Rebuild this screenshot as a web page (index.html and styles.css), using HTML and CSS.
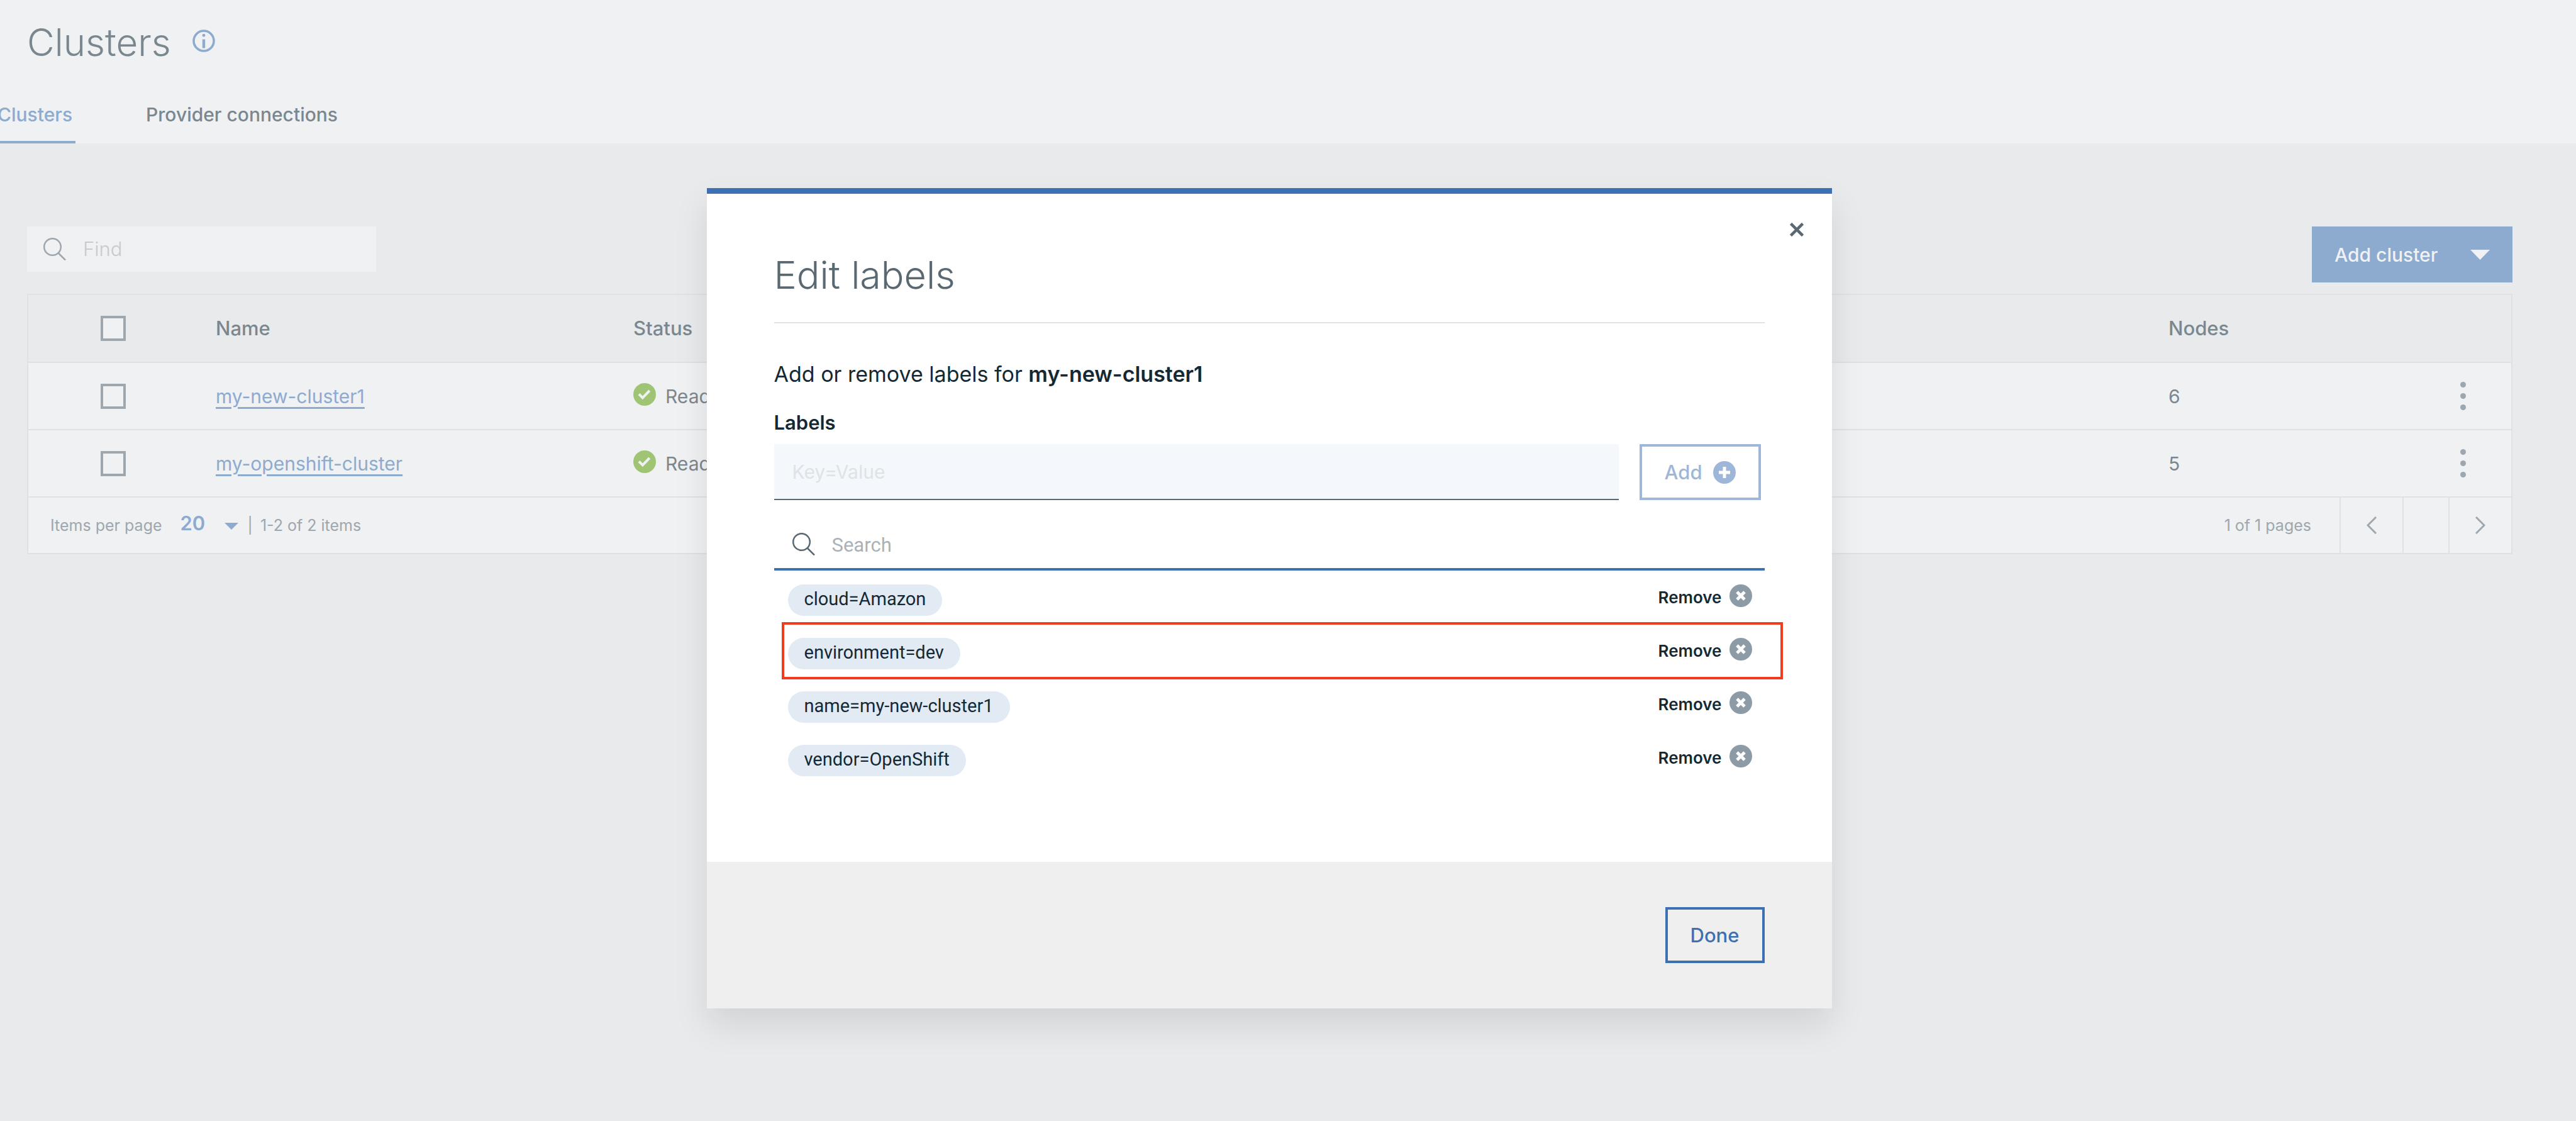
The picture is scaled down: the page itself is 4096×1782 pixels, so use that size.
FILE: index.html
```html
<!DOCTYPE html>
<html lang="en">
<head>
<meta charset="utf-8">
<title>Clusters</title>
<link rel="stylesheet" href="styles.css">
</head>
<body>
<header class="page-header">
  <div class="title-row">
    <h1 class="page-title">Clusters</h1>
    <svg class="icon-info" viewBox="0 0 36 36" role="img" aria-label="About clusters">
      <circle cx="18" cy="18" r="16" fill="none" stroke="currentColor" stroke-width="3.6"/>
      <circle cx="18" cy="9.200" r="2.4" fill="currentColor"/>
      <rect x="15.8" y="15.5" width="4.4" height="14" fill="currentColor"/>
    </svg>
  </div>
  <nav class="tabs">
    <a class="tab tab-active" href="#clusters">Clusters</a>
    <a class="tab" href="#connections">Provider connections</a>
  </nav>
</header>

<main class="page-main">
  <div class="toolbar">
    <label class="find">
      <svg class="icon-search" viewBox="0 0 36 36" aria-hidden="true">
        <circle cx="14.5" cy="14.5" r="13.3"/><path d="M24 24.5 35 35.5"/>
      </svg>
      <input class="find-input" type="search" placeholder="Find" aria-label="Find">
    </label>
    <button class="add-cluster" type="button">Add cluster
      <svg class="caret-large" viewBox="0 0 31 16" aria-hidden="true"><path d="M0 0h31L15.500 16z"/></svg>
    </button>
  </div>

  <section class="data">
    <table class="cluster-table">
      <thead>
        <tr>
          <th class="col-check"><input class="check" type="checkbox" aria-label="Select all clusters"></th>
          <th class="col-name">Name</th>
          <th class="col-status">Status</th>
          <th class="col-nodes">Nodes</th>
          <th class="col-actions"></th>
        </tr>
      </thead>
      <tbody>
        <tr>
          <td class="col-check"><input class="check" type="checkbox" aria-label="Select my-new-cluster1"></td>
          <td><a class="cluster-link" href="#my-new-cluster1">my-new-cluster1</a></td>
          <td><span class="status"><svg class="icon-ok" viewBox="0 0 36 36" aria-hidden="true"><circle cx="18" cy="18" r="18"/><path d="M9 17.500 14.800 23.300 25.800 12"/></svg>Ready</span></td>
          <td>6</td>
          <td class="col-actions"><button class="menu" type="button" aria-label="Actions"><svg class="icon-dots" viewBox="0 0 9 45"><circle cx="4.500" cy="4.500" r="4.500"/><circle cx="4.500" cy="22.500" r="4.500"/><circle cx="4.500" cy="40.500" r="4.500"/></svg></button></td>
        </tr>
        <tr>
          <td class="col-check"><input class="check" type="checkbox" aria-label="Select my-openshift-cluster"></td>
          <td><a class="cluster-link" href="#my-openshift-cluster">my-openshift-cluster</a></td>
          <td><span class="status"><svg class="icon-ok" viewBox="0 0 36 36" aria-hidden="true"><circle cx="18" cy="18" r="18"/><path d="M9 17.500 14.800 23.300 25.800 12"/></svg>Ready</span></td>
          <td>5</td>
          <td class="col-actions"><button class="menu" type="button" aria-label="Actions"><svg class="icon-dots" viewBox="0 0 9 45"><circle cx="4.500" cy="4.500" r="4.500"/><circle cx="4.500" cy="22.500" r="4.500"/><circle cx="4.500" cy="40.500" r="4.500"/></svg></button></td>
        </tr>
      </tbody>
    </table>
    <div class="pagination">
      <label for="page-size">Items per page</label>
      <span class="page-size-wrap">
        <select class="page-size" id="page-size"><option>20</option></select>
        <svg class="caret-small" viewBox="0 0 22 11" aria-hidden="true"><path d="M0 0h22L11 11z"/></svg>
      </span>
      <span class="divider">|</span>
      <span>1-2 of 2 items</span>
      <span class="page-count">1 of 1 pages</span>
      <button class="page-button" type="button" aria-label="Previous page"><svg class="icon-chevron" viewBox="0 0 16 28"><path d="M15 1 2 14l13 13"/></svg></button>
      <span class="page-current"></span>
      <button class="page-button" type="button" aria-label="Next page"><svg class="icon-chevron" viewBox="0 0 16 28"><path d="m1 1 13 13L1 27"/></svg></button>
    </div>
  </section>
</main>

<div class="overlay">
  <div class="modal" role="dialog" aria-modal="true" aria-labelledby="modal-title">
    <button class="close" type="button" aria-label="Close"><svg class="icon-close" viewBox="0 0 22 22"><path d="M1.500 1.500l19 19M20.500 1.500l-19 19"/></svg></button>
    <div class="modal-body">
      <h2 class="modal-title" id="modal-title">Edit labels</h2>
      <p class="modal-text">Add or remove labels for <b>my-new-cluster1</b></p>
      <label class="field-label" for="new-label">Labels</label>
      <div class="add-row">
        <input class="label-input" id="new-label" type="text" placeholder="Key=Value">
        <button class="add-button" type="button">Add
          <svg class="icon-round" viewBox="0 0 36 36" aria-hidden="true"><circle cx="18" cy="18" r="18"/><path d="M18 9v18M9 18h18"/></svg>
        </button>
      </div>
      <label class="search">
        <svg class="icon-search" viewBox="0 0 36 36" aria-hidden="true">
          <circle cx="14.5" cy="14.5" r="13.3"/><path d="M24 24.5 35 35.5"/>
        </svg>
        <input class="search-input" type="search" placeholder="Search" aria-label="Search">
      </label>
      <ul class="labels">
        <li class="label-row"><span class="chip">cloud=Amazon</span>
          <button class="remove" type="button">Remove <svg class="icon-round" viewBox="0 0 36 36" aria-hidden="true"><circle cx="18" cy="18" r="18"/><path d="m12 12 12 12M24 12 12 24"/></svg></button></li>
        <li class="label-row label-marked"><span class="chip">environment=dev</span>
          <button class="remove" type="button">Remove <svg class="icon-round" viewBox="0 0 36 36" aria-hidden="true"><circle cx="18" cy="18" r="18"/><path d="m12 12 12 12M24 12 12 24"/></svg></button></li>
        <li class="label-row"><span class="chip">name=my-new-cluster1</span>
          <button class="remove" type="button">Remove <svg class="icon-round" viewBox="0 0 36 36" aria-hidden="true"><circle cx="18" cy="18" r="18"/><path d="m12 12 12 12M24 12 12 24"/></svg></button></li>
        <li class="label-row"><span class="chip">vendor=OpenShift</span>
          <button class="remove" type="button">Remove <svg class="icon-round" viewBox="0 0 36 36" aria-hidden="true"><circle cx="18" cy="18" r="18"/><path d="m12 12 12 12M24 12 12 24"/></svg></button></li>
      </ul>
    </div>
    <footer class="modal-footer"><button class="done" type="button">Done</button></footer>
  </div>
</div>
</body>
</html>
```

FILE: styles.css
```css
* { box-sizing: border-box; }
body {
  margin: 0;
  min-height: 100vh;
  overflow-x: hidden;
  background: #e8eaec;
  color: #7b878f;
  font: 400 30px/40px Inter, "Liberation Sans", sans-serif;
}
h1, h2, p, ul { margin: 0; padding: 0; }
button, input, select { font: inherit; color: inherit; border: 0; border-radius: 0; background: none; padding: 0; margin: 0; outline: 0; }
svg { display: block; flex: none; }
input[type="search"] { appearance: none; }

/* header */
.page-header { background: #eff1f3; padding-top: 37px; }
.title-row { display: flex; align-items: center; gap: 34px; height: 60px; padding-left: 43px; }
.page-title { font-size: 60px; line-height: 60px; font-weight: 300; }
.icon-info { width: 36px; height: 36px; color: #8daacf; margin-bottom: 5px; }
.tabs { display: flex; gap: 112px; margin-top: 65px; margin-left: -4px; }
.tab { padding: 0 5px 22px 0; border-bottom: 4px solid transparent; font-size: 30px; font-weight: 500; color: #7b878f; text-decoration: none; }
.tab-active { color: #8daacf; border-color: #8daacf; }

/* toolbar */
.page-main { padding: 132px 101px 0 43px; }
.toolbar { display: flex; justify-content: space-between; align-items: flex-start; margin-bottom: 18px; }
.find { display: flex; align-items: center; gap: 27px; width: 555px; height: 72px; padding-left: 26px; background: #eff1f3; color: #9ea7ad; }
.icon-search { width: 36px; height: 36px; fill: none; stroke: currentColor; stroke-width: 2.5; }
.find-input { flex: 1; min-width: 0; font-size: 31px; font-weight: 300; }
.find-input::placeholder { color: #c6cbcf; opacity: 1; }
.add-cluster { display: flex; align-items: center; justify-content: space-between; width: 319px; height: 89px; padding: 0 36px; background: #8daacf; color: #eff1f3; font-size: 30px; font-weight: 500; }
.caret-large { width: 31px; height: 16px; fill: currentColor; }

/* table */
.data { border: 2px solid #dfe1e3; }
.cluster-table { width: 100%; table-layout: fixed; border-collapse: separate; border-spacing: 0; }
.cluster-table th, .cluster-table td { height: 107px; padding: 0; text-align: left; vertical-align: middle; border-bottom: 2px solid #dfe1e3; }
.cluster-table th { height: 108px; font-size: 31px; font-weight: 500; }
.cluster-table td { background: #eff1f3; }
.cluster-table .col-check { width: 298px; padding-left: 115px; }
.col-name { width: 664px; }
.col-nodes { width: 464px; }
.cluster-table .col-actions { width: 81px; }
.check { display: block; appearance: none; width: 40px; height: 40px; border: 4px solid #9ea7ad; background: #eff1f3; }
.cluster-link { color: #8daacf; text-decoration-thickness: 3px; text-underline-offset: 6px; }
.status { display: flex; align-items: center; gap: 15px; }
.icon-ok { width: 36px; height: 36px; margin-bottom: 5px; fill: #9fc574; }
.icon-ok path { fill: none; stroke: #eff1f3; stroke-width: 4; }
.menu { display: block; }
.icon-dots { width: 9px; height: 45px; fill: #9ea7ad; }

/* pagination */
.pagination { display: flex; align-items: center; height: 88px; padding-left: 35px; background: #eff1f3; color: #9ea7ad; font-size: 25px; }
.page-size-wrap { display: flex; align-items: center; gap: 30px; margin: 0 15px 6px 29px; color: #8daacf; }
.page-size { appearance: none; font-size: 31px; font-weight: 600; }
.caret-small { width: 22px; height: 11px; fill: currentColor; margin-top: 8px; }
.divider { margin-right: 12px; }
.page-count { margin-left: auto; padding-right: 45px; }
.page-button { display: flex; align-items: center; justify-content: center; width: 100px; height: 88px; border-left: 2px solid #dfe1e3; }
.page-current { width: 73px; height: 88px; border-left: 2px solid #dfe1e3; }
.icon-chevron { width: 16px; height: 28px; fill: none; stroke: #9ea7ad; stroke-width: 3; }

/* dialog */
.overlay { position: absolute; inset: 0; display: flex; justify-content: center; align-items: flex-start; padding: 299px 60px 0 0; }
.modal { position: relative; width: 90%; max-width: 1789px; border-top: 9px solid #3d70b2; background: #fff; color: #152935; box-shadow: 0 26px 51px rgba(0, 0, 0, .1); }
.close { position: absolute; top: 36px; right: 35px; padding: 10px; color: #5a6872; }
.icon-close { width: 22px; height: 22px; stroke: currentColor; stroke-width: 4.5; }
.modal-body { padding: 92px 107px 119px; }
.modal-title { padding-bottom: 38px; border-bottom: 2px solid #dfe3e6; color: #5a6872; font-size: 61px; line-height: 74px; font-weight: 300; }
.modal-text { margin-top: 61px; font-size: 34px; }
.modal-text b { font-weight: 600; }
.field-label { display: block; margin: 37px 0 14px; font-size: 31px; font-weight: 600; }
.add-row { display: flex; gap: 33px; height: 89px; padding-right: 6px; }
.label-input { flex: 1; min-width: 0; padding: 0 29px; border-bottom: 2px solid #5a6872; background: #f4f7fb; }
.label-input::placeholder { color: #dfe3e6; opacity: 1; }
.add-button { display: flex; align-items: center; justify-content: space-between; width: 193px; padding: 0 36px; border: 4px solid #9eb7d8; color: #9eb7d8; font-size: 31px; font-weight: 500; }
.icon-round { width: 36px; height: 36px; fill: currentColor; }
.icon-round path { stroke: #fff; stroke-width: 5; }
.search { display: flex; align-items: center; gap: 27px; height: 80px; margin-top: 32px; padding-left: 29px; border-bottom: 4px solid #3d70b2; color: #5a6872; }
.search-input { flex: 1; min-width: 0; padding-top: 4px; font-family: Roboto, sans-serif; font-size: 31px; }
.search-input::placeholder { color: #a9b2b8; opacity: 1; }
.labels { list-style: none; padding: 4px 20px 0 22px; }
.label-row { position: relative; display: flex; align-items: center; justify-content: space-between; height: 85px; }
.label-marked::after { content: ""; position: absolute; inset: -7px -49px 1px -10px; border: 4px solid #f13a1e; pointer-events: none; }
.chip { height: 50px; padding: 0 26px; border-radius: 25px; background: #e2eaf4; font: 400 29px/46px Roboto, sans-serif; }
.remove { display: flex; align-items: center; gap: 12px; margin-bottom: 8px; font-size: 26px; font-weight: 600; }
.remove .icon-round { margin-bottom: 6px; fill: #8c9ba5; }
.modal-footer { display: flex; justify-content: flex-end; align-items: center; height: 233px; padding: 0 107px; background: #efefef; }
.done { width: 158px; height: 89px; border: 4px solid #3d70b2; color: #3d70b2; font-size: 31px; font-weight: 500; }
```
